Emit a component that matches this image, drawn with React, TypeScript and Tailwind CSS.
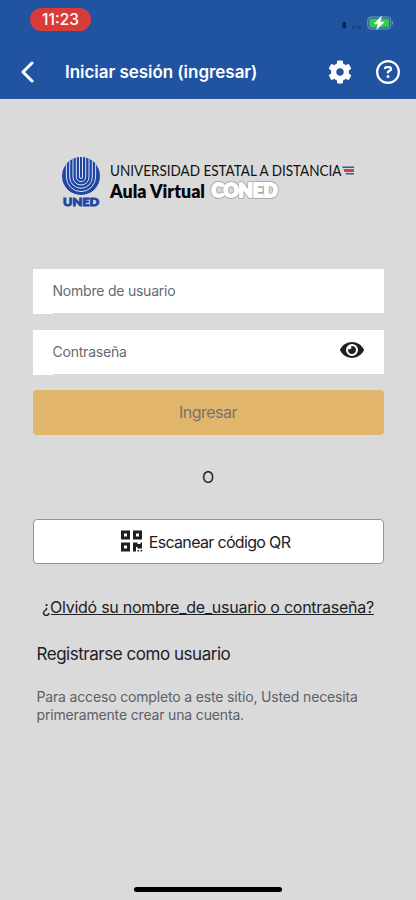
import React from 'react';
import { FaCog, FaEye, FaQrcode } from 'react-icons/fa';
import { FaRegCircleQuestion } from 'react-icons/fa6';

const StatusBar: React.FC = () => {
  return (
    <div className="flex items-start justify-between h-[46px] pl-[30px] pr-[22px]">
      <span className="mt-[8px] w-[61px] h-[23px] rounded-full bg-[#d93c38] text-white text-[15.5px] leading-[23px] font-medium text-center">
        11:23
      </span>
      <div className="flex items-center mt-[16px]">
        <svg className="w-[20px] h-[8px] mt-[5px]" viewBox="0 0 20 8">
          <rect x="0.5" y="0" width="3.5" height="6.5" rx="1" fill="#0d2450" />
          <rect x="5" y="1" width="3.5" height="5.5" rx="1" fill="#31548c" />
          <rect x="10" y="3.5" width="3.5" height="3" rx="1" fill="#1a437f" />
          <rect x="15.5" y="3.5" width="3.5" height="3" rx="1" fill="#1a437f" />
        </svg>
        <svg className="w-[27px] h-[14px] ml-[5px] overflow-visible" viewBox="0 0 27 14">
          <rect x="0.8" y="1" width="23" height="12" rx="3.2" fill="none" stroke="#7d9cc9" />
          <rect x="2.3" y="2.5" width="20" height="9" rx="2" fill="#33c75a" />
          <path d="M25.2 5v4c1.2-.5 1.2-3.5 0-4z" fill="#8fa9d0" />
          <path d="M14.5 0.3L7 7.8h4.2l-1.6 5.7 7.8-7.5h-4.3z" fill="#fff" stroke="#fff" strokeWidth="0.5" />
        </svg>
      </div>
    </div>
  );
};

const Header: React.FC = () => {
  return (
    <nav className="flex items-center h-[52px] pl-[21px] pr-[16px] text-white">
      <svg className="w-[13px] h-[22px]" viewBox="0 0 13 22" fill="none">
        <path d="M11 2L2 11l9 9" stroke="currentColor" strokeWidth="3" strokeLinecap="round" strokeLinejoin="round" />
      </svg>
      <h1 className="ml-[31px] mt-[1px] text-[17px] font-semibold tracking-[-0.04px] whitespace-nowrap">Iniciar sesión (ingresar)</h1>
      <FaCog className="ml-auto w-[24px] h-[24px]" />
      <FaRegCircleQuestion className="ml-[24px] w-[24px] h-[24px]" />
    </nav>
  );
};

const Logo: React.FC = () => {
  return (
    <svg className="block w-[296px] h-[54px] overflow-visible" viewBox="60 155 296 54" role="img">
      <clipPath id="globe">
        <circle cx="81" cy="176" r="19" />
      </clipPath>
      <circle cx="81" cy="176" r="19" fill="#1f46a5" />
      <g clipPath="url(#globe)" fill="none" stroke="#dbe2f0" strokeWidth="1">
        <path d="M79.5 155v22a1.5 1.5 0 0 0 3 0v-22" />
        <path d="M76.3 155v22a4.7 4.7 0 0 0 9.4 0v-22" />
        <path d="M73 155v22a8 8 0 0 0 16 0v-22" />
        <path d="M69.7 155v22a11.3 11.3 0 0 0 22.6 0v-22" />
        <path d="M66.4 155v22a14.6 14.6 0 0 0 29.2 0v-22" />
      </g>
      <g fontFamily="Lato, sans-serif">
        <text x="63" y="206" fontSize="12" fontWeight="900" fill="#1f46a5" stroke="#1f46a5" strokeWidth="1" textLength="36" lengthAdjust="spacingAndGlyphs">UNED</text>
        <text x="110" y="175.8" fontSize="15.8" fill="#111" textLength="231.5" lengthAdjust="spacingAndGlyphs">UNIVERSIDAD ESTATAL A DISTANCIA</text>
        <text x="110" y="197.5" fontSize="19" fontWeight="800" fill="#050505" textLength="95" lengthAdjust="spacingAndGlyphs">Aula Virtual</text>
        <text x="211.5" y="197.3" fontSize="18.5" fontWeight="900" fill="#a3a3a3" stroke="#a3a3a3" strokeWidth="3.6" strokeLinejoin="round" textLength="66" lengthAdjust="spacingAndGlyphs">CONED</text>
        <text x="211.5" y="197.3" fontSize="18.5" fontWeight="900" fill="#fff" stroke="#fff" strokeWidth="1.9" strokeLinejoin="round" textLength="66" lengthAdjust="spacingAndGlyphs" aria-hidden="true">CONED</text>
      </g>
      <path d="M342 166.5h12v1.5h-11.3z" fill="#2d58a8" />
      <path d="M343.4 169h10.6v3h-9.5z" fill="#df3848" />
      <path d="M345.5 173h8.5v1.5h-7.8z" fill="#2d58a8" />
    </svg>
  );
};

type FieldProps = {
  label: string;
  children?: React.ReactNode;
};

const Field: React.FC<FieldProps> = ({ label, children }) => {
  return (
    <div className="relative flex items-center justify-between h-[44px] px-[20px] bg-white text-[#666a70] text-[14px]">
      <span className="-mt-px tracking-[-0.22px]">{label}</span>
      {children}
      <span className="absolute left-0 top-full w-[20px] h-[0.5px] bg-white" />
    </div>
  );
};

const App: React.FC = () => {
  return (
    <div className="w-[416px] h-[900px] flex flex-col bg-[#dadada] font-['Inter',sans-serif] text-[#1d2125] overflow-hidden">
      <header className="bg-[#2154a0] h-[98.5px] flex-shrink-0">
        <StatusBar />
        <Header />
      </header>
      <main className="flex flex-col flex-1 px-[32.5px]">
        <div className="mt-[56.5px] ml-[27.5px]">
          <Logo />
        </div>
        <div className="mt-[60.3px] flex flex-col gap-[16.3px]">
          <Field label="Nombre de usuario" />
          <Field label="Contraseña">
            <FaEye className="w-[24px] h-[22px] text-[#1d2125] -mt-[3px]" />
          </Field>
          <button className="h-[45px] rounded-[4px] bg-[#e1b56c] text-[#77736c] text-[16px] tracking-[-0.5px]">
            Ingresar
          </button>
        </div>
        <p className="mt-[30px] text-center text-[16px] leading-[24px]">O</p>
        <button className="mt-[30px] pr-[5px] h-[45px] flex items-center justify-center gap-[7px] rounded-[4px] border border-[#8f959e] bg-white text-[16px]">
          <FaQrcode className="w-[21px] h-[24px]" />
          <span className="mt-px tracking-[-0.67px] whitespace-nowrap">Escanear código QR</span>
        </button>
        <a className="mt-[31px] self-center text-[16px] leading-[24px] tracking-[-0.26px] underline whitespace-nowrap">
          ¿Olvidó su nombre_de_usuario o contraseña?
        </a>
        <h2 className="mt-[23px] ml-[4px] text-[17px] leading-[24px] tracking-[-0.47px] whitespace-nowrap">Registrarse como usuario</h2>
        <p className="mt-[22px] ml-[4px] text-[14px] leading-[18px] tracking-[-0.16px] text-[#5c6068] whitespace-nowrap">
          Para acceso completo a este sitio, Usted necesita
          <br />
          primeramente crear una cuenta.
        </p>
      </main>
      <div className="self-center mb-[8.5px] w-[148px] h-[5px] rounded-full bg-black" />
    </div>
  );
};

export default App;
